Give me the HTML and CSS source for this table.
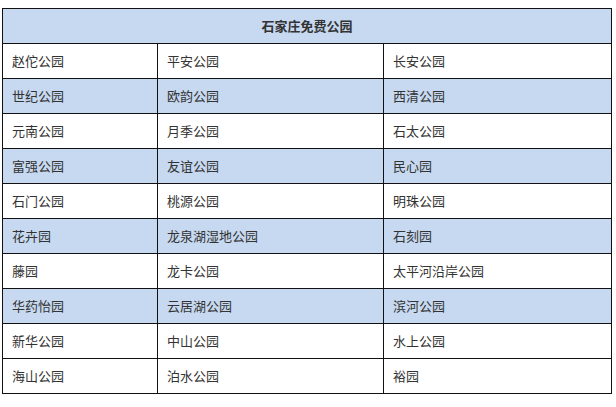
FILE: index.html
```html
<!DOCTYPE html>
<html lang="zh">
<head>
<meta charset="utf-8">
<link rel="stylesheet" href="styles.css">
</head>
<body>
<table class="parks">
  <colgroup>
    <col class="c1"><col class="c2"><col class="c3">
  </colgroup>
  <thead>
    <tr><th colspan="3">石家庄免费公园</th></tr>
  </thead>
  <tbody>
    <tr><td>赵佗公园</td><td>平安公园</td><td>长安公园</td></tr>
    <tr class="alt"><td>世纪公园</td><td>欧韵公园</td><td>西清公园</td></tr>
    <tr><td>元南公园</td><td>月季公园</td><td>石太公园</td></tr>
    <tr class="alt"><td>富强公园</td><td>友谊公园</td><td>民心园</td></tr>
    <tr><td>石门公园</td><td>桃源公园</td><td>明珠公园</td></tr>
    <tr class="alt"><td>花卉园</td><td>龙泉湖湿地公园</td><td>石刻园</td></tr>
    <tr><td>藤园</td><td>龙卡公园</td><td>太平河沿岸公园</td></tr>
    <tr class="alt"><td>华药怡园</td><td>云居湖公园</td><td>滨河公园</td></tr>
    <tr><td>新华公园</td><td>中山公园</td><td>水上公园</td></tr>
    <tr><td>海山公园</td><td>泊水公园</td><td>裕园</td></tr>
  </tbody>
</table>
</body>
</html>
```
FILE: styles.css
```css
html, body {
  margin: 0;
  padding: 0;
  background: #ffffff;
}
body {
  padding: 8px 0 0 2px;
  font-family: "Noto Sans CJK SC", "Noto Sans", sans-serif;
  font-size: 13px;
  color: #333333;
}
.parks {
  border-collapse: collapse;
  table-layout: fixed;
  width: 609px;
}
.parks .c1 { width: 155px; }
.parks .c2 { width: 226px; }
.parks .c3 { width: 228px; }
.parks th,
.parks td {
  border: 1px solid #111111;
  height: 35px;
  padding: 0 0 0 9px;
  box-sizing: border-box;
  text-align: left;
  vertical-align: middle;
  line-height: 16px;
}
.parks th {
  background: #c6d9f1;
  text-align: center;
  padding: 0;
  font-weight: bold;
  color: #333333;
}
.parks tr.alt td {
  background: #c6d9f1;
}
```
